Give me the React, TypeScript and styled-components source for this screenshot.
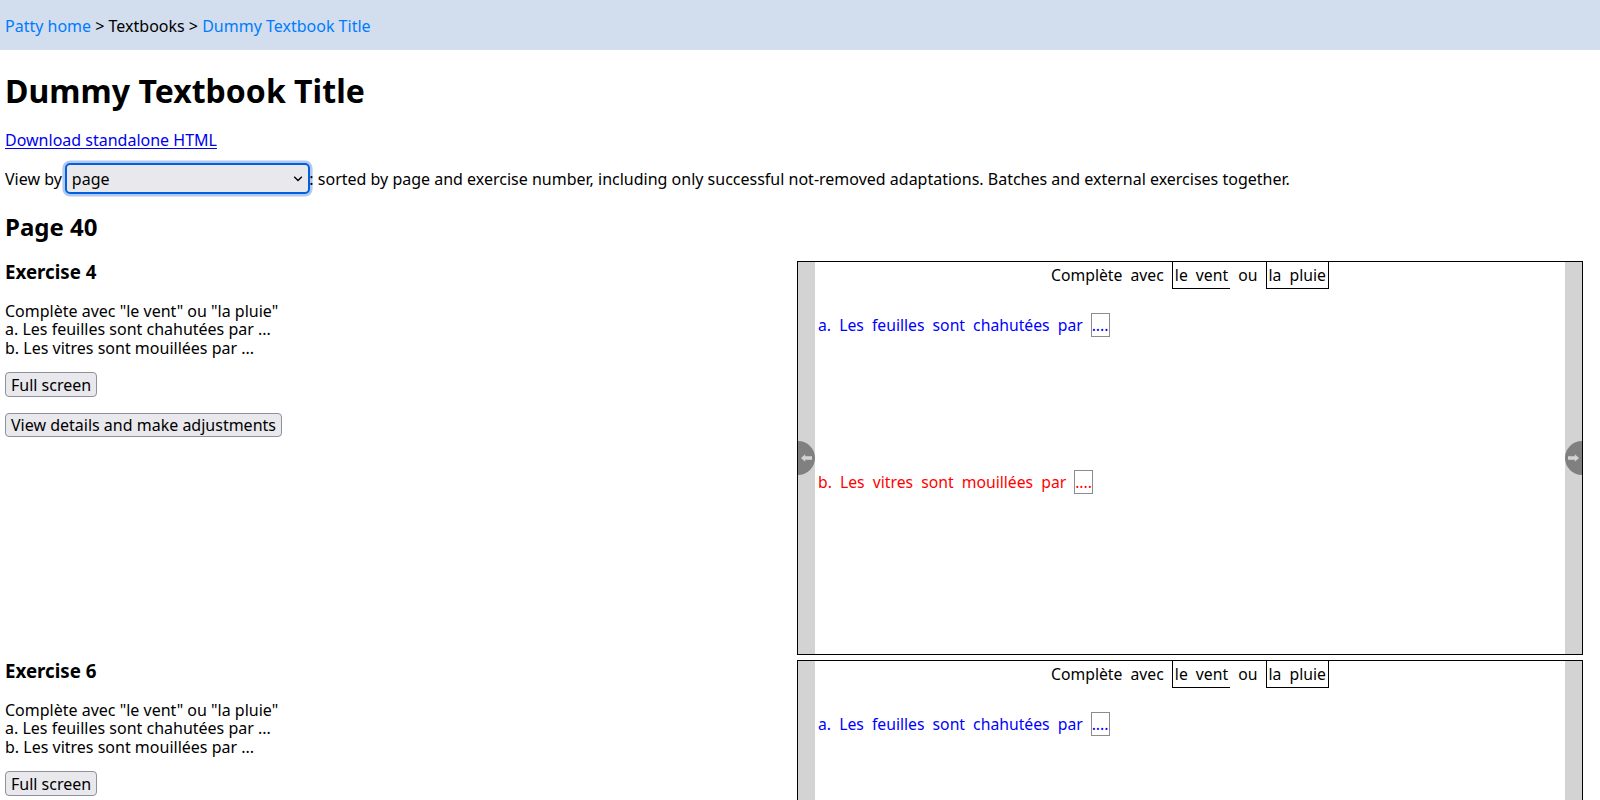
import React from "react";
import styled, { createGlobalStyle } from "styled-components";

const GlobalStyle = createGlobalStyle`
  html { overflow: hidden; }
  body {
    margin: 0;
    background: #fff;
    color: #000;
    font-family: "Noto Sans", sans-serif;
    font-size: 16px;
    line-height: 1.15;
    height: 800px;
    overflow: hidden;
  }
`;

const Nav = styled.nav`
  background: #d2deee;
  padding: 17px 5px 15px;
`;

const NavLink = styled.a`
  color: #007bff;
  text-decoration: none;
`;

const Main = styled.main`
  padding: 0 17px 0 5px;
`;

const Title = styled.h1`
  font-size: 32px;
  letter-spacing: 0.03px;
  margin: 22.4px 0 21.44px;
`;

const Download = styled.p`
  margin: 0;
`;

const Statement = styled.p`
  margin: 0 0 15.3px;
`;

const DownloadLink = styled.a`
  color: #0000ee;
  text-decoration: underline;
  text-decoration-thickness: 1px;
  text-underline-offset: 2px;
`;

const ViewBy = styled.div`
  display: flex;
  align-items: center;
  height: 31px;
  margin: 13.9px 0 19.1px;
  white-space: pre;
`;

const Select = styled.button`
  display: flex;
  align-items: center;
  justify-content: space-between;
  width: 245px;
  height: 31px;
  margin: 0 -0.5px 0 3px;
  padding: 0 5px;
  border: 2px solid #0060df;
  border-radius: 5px;
  background: #e9e9ed;
  color: #000;
  font: inherit;
  line-height: 1.15;
  box-shadow: 0 0 0 2.6px #b3c9ee;
`;

const PageHeading = styled.h2`
  font-size: 24px;
  margin: 0 0 19.92px;
`;

const Exercise = styled.section`
  display: grid;
  grid-template-columns: 1fr 786px;
  height: 394px;
  margin-bottom: 5px;
`;

const ExerciseHeading = styled.h3`
  font-size: 18.72px;
  margin: 0 0 19.4px;
`;

const Button = styled.button`
  display: block;
  margin: 0 0 15.7px;
  padding: 2.3px 5px 2px;
  border: 1px solid #8f8f9d;
  border-radius: 4px;
  background: #e9e9ed;
  color: #000;
  font: inherit;
  line-height: 1.15;
`;

const Preview = styled.div`
  display: grid;
  grid-template-columns: 17px 1fr 17px;
  box-sizing: border-box;
  height: 394px;
  border: 1px solid #000;
  font-size: 15.74px;
  word-spacing: 4px;
`;

const Side = styled.div`
  display: flex;
  align-items: center;
  background: lightgray;
  overflow: hidden;
`;

const Pager = styled.button<{ $side: "left" | "right" }>`
  display: flex;
  align-items: center;
  width: 17px;
  height: 34px;
  padding: 0 3px;
  border: 0;
  border-radius: ${(p) => (p.$side === "left" ? "0 17px 17px 0" : "17px 0 0 17px")};
  background: gray;
`;

const Arrow = styled.svg<{ $flip: boolean }>`
  display: block;
  flex: none;
  transform: ${(p) => (p.$flip ? "scaleX(-1)" : "none")};
`;

const Sheet = styled.div`
  display: flex;
  flex-direction: column;
`;

const Instruction = styled.div`
  display: flex;
  justify-content: center;
  height: 27px;
  line-height: 27px;
  margin-bottom: 24px;
  white-space: pre;
`;

const Choice = styled.span<{ $open?: boolean }>`
  box-sizing: border-box;
  height: 27px;
  line-height: 27px;
  padding: 0 2px;
  border: solid #000;
  border-width: 0 ${(p) => (p.$open ? "0" : "1px")} 1px 1px;
`;

const Sentence = styled.div<{ $color: string }>`
  display: flex;
  align-items: center;
  height: 24px;
  padding-left: 3px;
  margin-bottom: 133px;
  color: ${(p) => p.$color};
  white-space: pre;
`;

const Blank = styled.span`
  box-sizing: border-box;
  height: 24px;
  line-height: 22px;
  margin-left: -0.2px;
  border: 1px solid #8c8c8c;
`;

function Page({ side }: { side: "left" | "right" }) {
  return (
    <Side>
      <Pager $side={side}>
        <Arrow $flip={side === "right"} width="11" height="8" viewBox="0 0 11 8">
          <path d="M0 4L4.2 0.3V2.3H11V5.7H4.2V7.7Z" fill="lightgray" />
        </Arrow>
      </Pager>
    </Side>
  );
}

function ExerciseRow({ number }: { number: number }) {
  return (
    <Exercise>
      <div>
        <ExerciseHeading>Exercise {number}</ExerciseHeading>
        <Statement>
          Complète avec "le vent" ou "la pluie"
          <br />
          a. Les feuilles sont chahutées par ...
          <br />
          b. Les vitres sont mouillées par ...
        </Statement>
        <Button>Full screen</Button>
        <Button>View details and make adjustments</Button>
      </div>
      <Preview>
        <Page side="left" />
        <Sheet>
          <Instruction>
            {"Complète avec "}
            <Choice $open>le vent</Choice>
            {" ou "}
            <Choice>la pluie</Choice>
          </Instruction>
          <Sentence $color="blue">
            {"a. Les feuilles sont chahutées par "}
            <Blank>....</Blank>
          </Sentence>
          <Sentence $color="red">
            {"b. Les vitres sont mouillées par "}
            <Blank>....</Blank>
          </Sentence>
        </Sheet>
        <Page side="right" />
      </Preview>
    </Exercise>
  );
}

export default function App() {
  return (
    <>
      <GlobalStyle />
      <Nav>
        <NavLink>Patty home</NavLink> &gt; Textbooks &gt; <NavLink>Dummy Textbook Title</NavLink>
      </Nav>
      <Main>
        <Title>Dummy Textbook Title</Title>
        <Download>
          <DownloadLink>Download standalone HTML</DownloadLink>
        </Download>
        <ViewBy>
          View by
          <Select>
            page
            <svg width="10" height="7" viewBox="0 0 10 7">
              <path d="M1.2 1.8L5 5.6L8.8 1.8" fill="none" stroke="#000" strokeWidth="1.4" />
            </svg>
          </Select>
          {": sorted by page and exercise number, including only successful not-removed adaptations. Batches and external exercises together."}
        </ViewBy>
        <PageHeading>Page 40</PageHeading>
        <ExerciseRow number={4} />
        <ExerciseRow number={6} />
      </Main>
    </>
  );
}
